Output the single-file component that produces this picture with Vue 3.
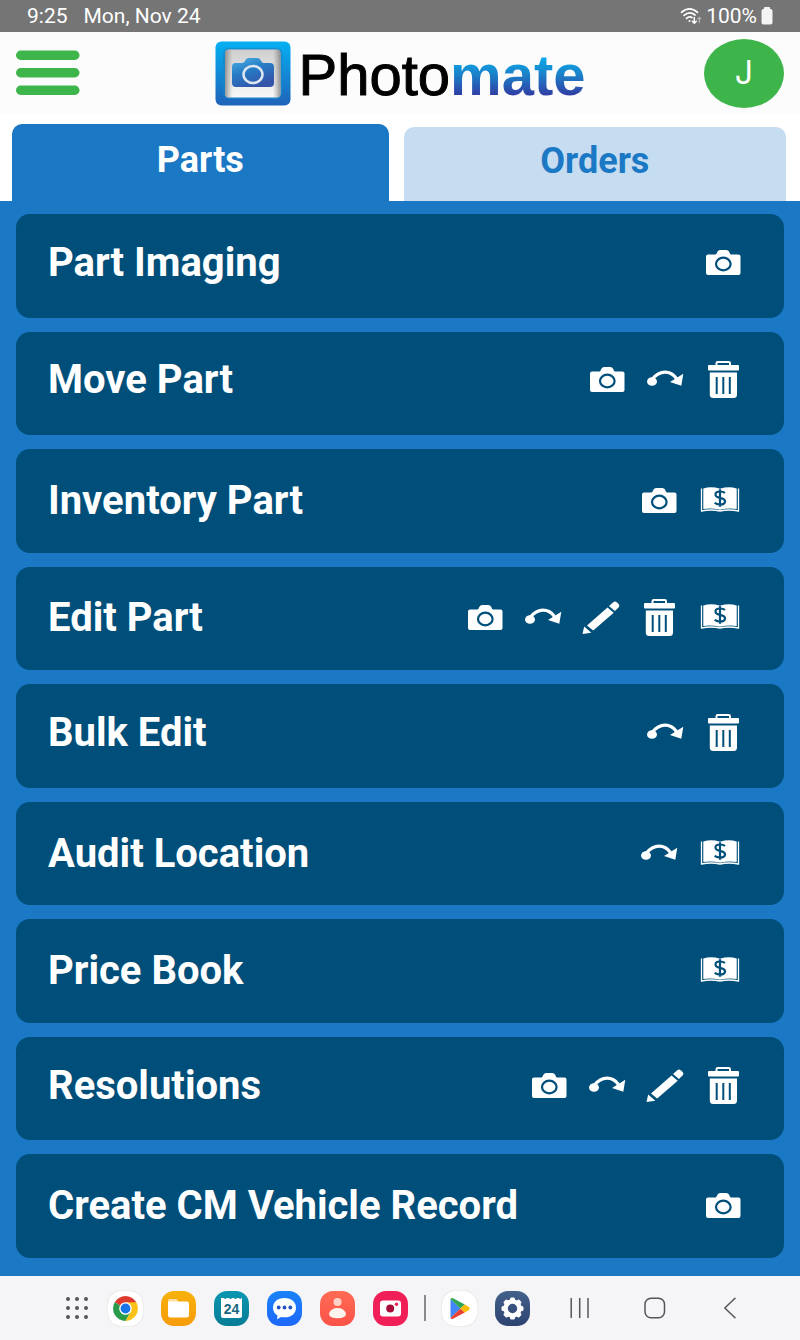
<script setup>
import { ref } from 'vue'

const tabs = ['Parts', 'Orders']
const activeTab = ref('Parts')

const actions = [
  { label: 'Part Imaging', icons: ['camera'], raised: true },
  { label: 'Move Part', icons: ['camera', 'move', 'trash'], raised: true },
  { label: 'Inventory Part', icons: ['camera', 'book'] },
  { label: 'Edit Part', icons: ['camera', 'move', 'pencil', 'trash', 'book'] },
  { label: 'Bulk Edit', icons: ['move', 'trash'], raised: true },
  { label: 'Audit Location', icons: ['move', 'book'] },
  { label: 'Price Book', icons: ['book'] },
  { label: 'Resolutions', icons: ['camera', 'move', 'pencil', 'trash'], raised: true },
  { label: 'Create CM Vehicle Record', icons: ['camera'] },
]
</script>

<template>
  <div class="screen">
    <div class="status">
      <div class="status-left"><span>9:25</span><span>Mon, Nov 24</span></div>
      <div class="status-right">
        <svg width="22" height="18" viewBox="0 0 22 18" fill="none" stroke="#fff" stroke-width="1.7" stroke-linecap="round" aria-hidden="true">
          <path d="M1.5 5.4Q9.500-1.600 17.500 5.400" />
          <path d="M4 8.400Q9.500 3.600 15 8" />
          <path d="M6.500 11.300Q9.300 8.700 12 10.500" />
          <circle cx="9.500" cy="14" r="1" fill="#fff" stroke="none" />
          <path d="M14.300 10.500v5.500M12.300 14.300l2 2 2-2" stroke-width="1.500" />
          <path d="M19.300 15.500v-5M17.800 11.800l1.500-1.500 1.500 1.500" stroke="#b5b5b5" stroke-width="1.200" />
        </svg>
        <span>100%</span>
        <svg width="12" height="18" viewBox="0 0 12 18" fill="#f4f4f4" aria-hidden="true">
          <rect x="3" y="0" width="6" height="4" rx="1" />
          <rect x="0.500" y="2" width="11" height="15.500" rx="2" />
        </svg>
      </div>
    </div>

    <header class="header">
      <button class="menu" type="button" aria-label="Menu">
        <svg width="64" height="46" viewBox="0 0 64 46" fill="#3eb54a">
          <rect y="0.500" width="63.500" height="9.500" rx="4.750" />
          <rect y="18" width="63.500" height="9.500" rx="4.750" />
          <rect y="35.500" width="63.500" height="9.500" rx="4.750" />
        </svg>
      </button>
      <div class="brand">
        <svg width="76" height="65" viewBox="0 0 76 65" aria-hidden="true">
          <defs>
            <linearGradient id="frame" x1="0" y1="0" x2="0" y2="1"><stop offset="0" stop-color="#05b0f2" /><stop offset="1" stop-color="#1f63ba" /></linearGradient>
            <linearGradient id="plate" x1="0" y1="0" x2="0" y2="1"><stop offset="0" stop-color="#cfcfcf" /><stop offset="1" stop-color="#f8f8f8" /></linearGradient>
            <linearGradient id="edge" x1="0" y1="0" x2="1" y2="0"><stop offset="0" stop-color="#777" stop-opacity=".75" /><stop offset=".14" stop-color="#999" stop-opacity="0" /><stop offset=".86" stop-color="#999" stop-opacity="0" /><stop offset="1" stop-color="#777" stop-opacity=".75" /></linearGradient>
            <linearGradient id="cam" x1="0" y1="0" x2=".5" y2="1"><stop offset="0" stop-color="#4eafe3" /><stop offset=".5" stop-color="#267cc6" /><stop offset="1" stop-color="#3455a9" /></linearGradient>
          </defs>
          <rect x="0.500" y="0.500" width="75" height="64" rx="6" fill="url(#frame)" />
          <rect x="8" y="7" width="59.500" height="51" rx="6" fill="#1886c8" opacity=".7" />
          <rect x="10" y="8.500" width="55.500" height="48" rx="4" fill="url(#plate)" />
          <rect x="10" y="8.500" width="55.500" height="48" rx="4" fill="url(#edge)" />
          <path d="M20 22h7q2 0 3-2 1-3 4-3h8q3 0 4 3 1 2 3 2h6q4 0 4 4v16q0 4-4 4H21q-4 0-4-4V26q0-4 3-4z" fill="url(#cam)" />
          <ellipse cx="38" cy="33.500" rx="9.500" ry="8.500" fill="none" stroke="#dbe6f0" stroke-width="2.500" />
        </svg>
        <div class="wordmark"><span class="photo">Photo</span><span class="mate">mate</span></div>
      </div>
      <button class="avatar" type="button" aria-label="Account J">J</button>
    </header>

    <div class="tabs" role="tablist">
      <button
        v-for="tab in tabs"
        :key="tab"
        type="button"
        role="tab"
        class="tab"
        :class="{ active: tab === activeTab }"
        :aria-selected="tab === activeTab"
        @click="activeTab = tab"
      >{{ tab }}</button>
    </div>

    <main class="panel">
      <button v-for="a in actions" :key="a.label" type="button" class="action" :class="{ raised: a.raised }">
        <span class="label">{{ a.label }}</span>
        <span class="icons">
          <template v-for="i in a.icons" :key="i">
            <svg v-if="i === 'camera'" width="36" height="38" viewBox="0 0 36 38" fill="#fff">
              <path d="M3 10.500h7.500q1 0 1.500-2 .8-2.500 3-2.500h6.500q2.200 0 3 2.500.5 2 1.500 2h7.500q2 0 2 2v16.500q0 2-2 2H3q-2 0-2-2V12.500q0-2 2-2z" />
              <ellipse cx="18.300" cy="20" rx="7.300" ry="6.300" fill="none" stroke="#004f7a" stroke-width="2.200" />
            </svg>
            <svg v-else-if="i === 'move'" width="36" height="38" viewBox="0 0 36 38" fill="#fff">
              <ellipse cx="5" cy="20.500" rx="5" ry="4.300" />
              <path d="M5 18.500Q11 11.200 18 11.200T29.500 17.500" fill="none" stroke="#fff" stroke-width="3.200" />
              <path d="M23 21L36.300 12.800 34.300 24.800z" />
            </svg>
            <svg v-else-if="i === 'pencil'" width="36" height="38" viewBox="0 0 36 38" fill="#fff">
              <path d="M-0.500 35L1.200 27.500 8.300 33.700z" />
              <path d="M4 26.500L24.500 8.500 30.700 13.800 10.200 31.500z" />
              <path d="M26 7L30 3.400q2-1.600 4 0l1.700 1.600q1.600 1.600-.2 3.400L31.900 12z" />
            </svg>
            <svg v-else-if="i === 'trash'" width="36" height="38" viewBox="0 0 36 38">
              <path d="M11.500 5V2.200q0-1.200 1.200-1.200h11.100q1.200 0 1.200 1.200V5" fill="none" stroke="#fff" stroke-width="2" />
              <rect x="3" y="4" width="31" height="5.500" rx="1" fill="#fff" />
              <path d="M4.800 11.500h27.200V33.500q0 3.500-3.500 3.500H8.300Q4.800 37 4.800 33.500z" fill="#fff" />
              <path d="M11.700 16v17M18.300 16v17M24.800 16v17" stroke="#004f7a" stroke-width="2" />
            </svg>
            <svg v-else width="42" height="38" viewBox="0 0 42 38">
              <path d="M2.500 6.500v22.500q9.500-2 18.500 0 9-2 18.500 0v-22.500" fill="none" stroke="#fff" stroke-width="1.300" />
              <path d="M4.300 6.500q8-2.500 16.700.3 8.700-2.800 16.700-.3v20.500q-8-1.500-16.700.8-8.700-2.300-16.700-.8z" fill="#fff" />
              <path d="M26 11Q24.300 9.500 21 9.500q-4.500 0-4.500 3 0 2.600 4.500 3.300 5 .9 5 3.500 0 3.300-5 3.300-3.500 0-5.300-1.800M21 7.200v17.600" fill="none" stroke="#004f7a" stroke-width="2.200" />
            </svg>
          </template>
        </span>
      </button>
    </main>

    <nav class="dock" aria-label="System">
      <button class="launcher" type="button" aria-label="All apps">
        <svg width="30" height="24" viewBox="0 0 30 24" fill="#565656">
          <g v-for="y in [3, 12, 21]" :key="y"><circle v-for="x in [6, 15, 24]" :key="x" :cx="x" :cy="y" r="2" /></g>
        </svg>
      </button>
      <div class="apps">
        <button type="button" class="app white" aria-label="Chrome">
          <svg viewBox="0 0 35 35">
            <path d="M17.500 17.500L6.700 11.300A12.500 12.500 0 0 1 28.300 11.300z" fill="#de3b30" />
            <path d="M6.700 11.300L17.500 17.500 22.900 20.600 17.500 30A12.500 12.500 0 0 1 6.700 11.300z" fill="#2b9b4b" />
            <path d="M17.500 11.300H28.300A12.500 12.500 0 0 1 17.500 30L22.900 20.600z" fill="#fbc116" />
            <circle cx="17.500" cy="17.500" r="6.300" fill="#fff" /><circle cx="17.500" cy="17.500" r="4.900" fill="#1a73e8" />
          </svg>
        </button>
        <button type="button" class="app files" aria-label="My Files">
          <svg viewBox="0 0 35 35"><path d="M7 10q0-2 2-2h6q1.500 0 2 2v3H7z" fill="#fde0a0" /><path d="M7 11.500q0-1 1-1h18q2 0 2 2V24q0 2.500-2.500 2.500h-16Q7 26.500 7 24z" fill="#fff" /></svg>
        </button>
        <button type="button" class="app calendar" aria-label="Calendar">
          <svg viewBox="0 0 35 35"><path d="M7 7h3q1 2 2.500 0h2.500q1.500 2 3 0h2q1.500 2 3 0h2q1 2 2.500 0h.5v18q0 2-2 2H9q-2 0-2-2z" fill="#fff" /></svg>
          <span class="day">24</span>
        </button>
        <button type="button" class="app messages" aria-label="Messages">
          <svg viewBox="0 0 35 35"><path d="M17.500 7C10.500 7 6 11 6 16.700c0 3.300 1.500 6 4.500 7.800l-.5 3.700 4-2.300c1 .3 2.300.4 3.500.4 7 0 11.500-4 11.500-9.600S24.500 7 17.500 7z" fill="#fff" /><g fill="#2451c5"><circle cx="11.700" cy="16.500" r="1.900" /><circle cx="17.500" cy="16.500" r="1.900" /><circle cx="23.300" cy="16.500" r="1.900" /></g></svg>
        </button>
        <button type="button" class="app contacts" aria-label="Contacts">
          <svg viewBox="0 0 35 35"><circle cx="17.500" cy="11" r="4" fill="#ffd2c7" /><path d="M9 22.500q2-5.500 8.500-5.500t8.500 5.500q0 4.800-8.500 4.800T9 22.500z" fill="#fff5ef" /></svg>
        </button>
        <button type="button" class="app camera" aria-label="Camera">
          <svg viewBox="0 0 35 35"><rect x="7" y="9.500" width="21" height="16" rx="3" fill="#fff" /><circle cx="17.200" cy="17.500" r="4" fill="#a50d38" /><circle cx="23.500" cy="13.300" r="1.700" fill="#ef2056" /></svg>
        </button>
      </div>
      <span class="divider"></span>
      <div class="apps">
        <button type="button" class="app white" aria-label="Play Store">
          <svg viewBox="0 0 35 35">
            <path d="M8.500 8v19l9.800-9.500z" fill="#4285f4" />
            <path d="M8.500 8q.5-1.500 2.500-.7L22.800 13.500 18.300 17.500z" fill="#2fa452" />
            <path d="M8.500 27q.5 1.500 2.500.7L22.800 21.500 18.300 17.500z" fill="#e54335" />
            <path d="M22.800 13.500L27 16q1.500 1.500 0 3l-4.200 2.500-4.500-4z" fill="#fbbc04" />
          </svg>
        </button>
        <button type="button" class="app settings" aria-label="Settings">
          <svg viewBox="0 0 35 35">
            <circle cx="17.500" cy="17.500" r="7" fill="none" stroke="#fff" stroke-width="4.500" />
            <g fill="#fff"><rect v-for="n in 8" :key="n" x="15" y="6.500" width="5" height="5" rx="1.500" :transform="`rotate(${n * 45} 17.500 17.500)`" /></g>
          </svg>
        </button>
      </div>
      <div class="keys">
        <button type="button" aria-label="Recents"><svg width="32" height="24" viewBox="0 0 32 24"><path d="M7.200 2.500v19M15.700 2.500v19M24 2.500v19" /></svg></button>
        <button type="button" aria-label="Home"><svg width="32" height="24" viewBox="0 0 32 24"><rect x="6" y="2.200" width="19.500" height="19.500" rx="6" /></svg></button>
        <button type="button" aria-label="Back"><svg width="32" height="24" viewBox="0 0 32 24"><path d="M21 2.300L10.800 12 21 21.700" /></svg></button>
      </div>
    </nav>
  </div>
</template>

<style>
body { margin: 0; background: #fff; }
</style>

<style scoped>
.screen { min-height: 100vh; display: flex; flex-direction: column; font-family: Roboto, "Liberation Sans", sans-serif; }
* { box-sizing: border-box; }
button { border: 0; padding: 0; margin: 0; background: none; font-family: inherit; cursor: pointer; }
svg { display: block; flex: none; overflow: visible; }

.status { height: 32px; padding: 0 27px; display: flex; align-items: center; justify-content: space-between; background: #757575; color: #fff; font-size: 21px; line-height: 24px; }
.status-left { display: flex; gap: 16px; }
.status-right { display: flex; align-items: center; gap: 4px; }

.header { height: 82px; padding: 0 16px; display: grid; grid-template-columns: 1fr auto 1fr; align-items: center; background: #fcfcfd; }
.menu { justify-self: start; }
.avatar { justify-self: end; width: 80px; height: 69px; border-radius: 50%; background: #3eb54a; color: #fff; font-family: Inter, sans-serif; font-size: 32px; line-height: 40px; }
.brand { display: flex; align-items: center; gap: 8px; }
.wordmark { display: flex; padding-top: 4px; font-family: "Liberation Sans", sans-serif; font-size: 58px; line-height: 64px; color: #000; }
.photo { -webkit-text-stroke: 1px #000; }
.mate { font-weight: 700; background: linear-gradient(#08b0ee 20%, #1c80c8 50%, #3238a0 84%); background-clip: text; color: transparent; }

.tabs { padding: 10px 14px 0 12px; display: flex; align-items: flex-end; gap: 15px; background: #fff; }
.tab { flex: 66; height: 74px; padding-bottom: 6px; border-radius: 10px 10px 0 0; background: #c6dcf0; color: #1a78c4; font-size: 36px; font-weight: 700; line-height: 40px; }
.tab.active { flex: 65; height: 77px; background: #1a78c4; color: #fff; }

.panel { flex: 1; padding: 13px 16px 18px; display: grid; grid-auto-rows: 1fr; gap: 14px; background: #1a78c4; }
.action { min-height: 64px; padding: 0 43px 0 32px; border-radius: 14px; background: #004f7a; color: #fff; display: flex; align-items: center; justify-content: space-between; text-align: left; }
.raised { padding-bottom: 6px; }
.label { font-size: 40px; font-weight: 700; line-height: 44px; }
.icons { display: flex; align-items: center; gap: 22px; }

.dock { height: 64px; padding-left: 8px; display: flex; align-items: center; justify-content: center; gap: 16px; background: #f5f5f8; }
.apps { display: flex; gap: 18px; }
.app { position: relative; width: 35px; height: 35px; border-radius: 13px; }
.app svg { width: 35px; height: 35px; }
.white { background: #fff; box-shadow: 0 0 1px #bbb; }
.files { background: linear-gradient(#f6b10a, #f69c0b); }
.calendar { background: linear-gradient(#0a96b0, #077c96); }
.day { position: absolute; inset: 9px 0 auto; font-family: "Liberation Sans", sans-serif; font-size: 14px; line-height: 18px; font-weight: 700; color: #17677f; text-align: center; }
.messages { background: linear-gradient(#1b83f8, #1d68fb); }
.contacts { background: linear-gradient(#ff6b55, #fb5248); }
.camera { background: #f01f57; }
.settings { background: linear-gradient(#43618a, #2d4371); }
.divider { width: 2px; height: 26px; background: #8b8b8d; }
.keys { display: flex; gap: 43px; margin-left: 18px; }
.keys svg { fill: none; stroke: #555; stroke-width: 1.5; stroke-linecap: round; stroke-linejoin: round; }
</style>
